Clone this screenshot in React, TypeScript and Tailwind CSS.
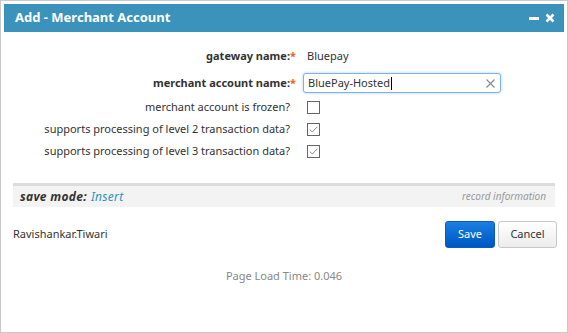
const font = { fontFamily: '"Noto Sans", "Open Sans", sans-serif' };

function Check({ checked }: { checked?: boolean }) {
  return (
    <span className="flex h-[13px] w-[13px] items-center justify-center border border-[#666] bg-white">
      {checked && (
        <svg width="9" height="7" viewBox="0 0 9 7" fill="none">
          <path d="M0.8 3.6 L3.3 6 L8.3 0.8" stroke="#888" strokeWidth="1" />
        </svg>
      )}
    </span>
  );
}

function Label({ text, bold, required }: { text: string; bold?: boolean; required?: boolean }) {
  return (
    <div className={`flex justify-end pr-[4px] text-[#333] ${bold ? 'font-bold' : ''}`}>
      <span>{text}</span>
      <span className={`w-[6px] text-[#f05a1a] ${required ? '' : 'invisible'}`}>*</span>
    </div>
  );
}

export default function App() {
  return (
    <div className="h-[333px] w-[568px] border border-[#c9c9c9] bg-white p-[3px] text-[11px]" style={font}>
      {/* title bar */}
      <div className="flex h-[28px] items-center justify-between bg-[#3b93bc] pl-[11px] pr-[9px] text-white">
        <span className="text-[13px] font-bold">Add - Merchant Account</span>
        <div className="flex items-center gap-[6px]">
          <span className="block h-[3px] w-[10px] bg-white" />
          <svg width="10" height="10" viewBox="0 0 10 10">
            <path d="M1.5 1.5 L8.5 8.5 M8.5 1.5 L1.5 8.5" stroke="white" strokeWidth="2.6" />
          </svg>
        </div>
      </div>

      {/* form */}
      <div className="mt-[13px] grid grid-cols-[296px_1fr] items-center">
        <Label text="gateway name:" bold required />
        <div className="flex h-[22px] items-center pl-[7px] text-[#333]">Bluepay</div>

        <div className="mt-[6px]"><Label text="merchant account name:" bold required /></div>
        <div className="mt-[6px] pl-[3px]">
          <div className="flex h-[20px] w-[198px] items-center justify-between rounded-[3px] border border-[#7fb2e5] bg-white pl-[4px] pr-[5px] text-[#333] shadow-[0_0_3px_#a9cdf0]">
            <span className="flex items-center">
              BluePay-Hosted<span className="ml-[1px] inline-block h-[13px] w-[1px] bg-black" />
            </span>
            <svg width="9" height="9" viewBox="0 0 9 9">
              <path d="M0.5 0.5 L8.5 8.5 M8.5 0.5 L0.5 8.5" stroke="#888" strokeWidth="1.1" />
            </svg>
          </div>
        </div>

        <div className="mt-[3px]"><Label text="merchant account is frozen?" /></div>
        <div className="mt-[3px] flex h-[22px] items-center pl-[7px]"><Check /></div>

        <Label text="supports processing of level 2 transaction data?" />
        <div className="flex h-[22px] items-center pl-[7px]"><Check checked /></div>

        <Label text="supports processing of level 3 transaction data?" />
        <div className="flex h-[22px] items-center pl-[7px]"><Check checked /></div>
      </div>

      {/* save mode bar */}
      <div className="mx-[9px] mt-[21px] border-t-[3px] border-[#dcdcdc] bg-[#f3f3f3]">
        <div className="flex h-[21px] items-center justify-between pl-[7px] pr-[9px] italic">
          <span className="text-[12px]">
            <span className="font-bold tracking-[0.3px] text-[#333]">save mode:</span>
            <span className="ml-[4px] tracking-[0.3px] text-[#2e93b8]">Insert</span>
          </span>
          <span className="text-[10px] text-[#999]">record information</span>
        </div>
      </div>

      {/* footer */}
      <div className="mx-[9px] mt-[14px] flex items-center justify-between">
        <span className="text-[#333]">Ravishankar.Tiwari</span>
        <div className="mr-[-2px] flex gap-[3px]">
          <button className="h-[27px] w-[50px] rounded-[3px] border border-[#0a5cbf] bg-gradient-to-b from-[#1a7fe0] to-[#0056c2] text-[11px] text-white">
            Save
          </button>
          <button className="h-[27px] w-[59px] rounded-[3px] border border-[#c8c8c8] bg-gradient-to-b from-[#ffffff] to-[#ececec] text-[11px] text-[#333]">
            Cancel
          </button>
        </div>
      </div>

      <div className="mt-[20px] text-center text-[#888]">Page Load Time: 0.046</div>
    </div>
  );
}
